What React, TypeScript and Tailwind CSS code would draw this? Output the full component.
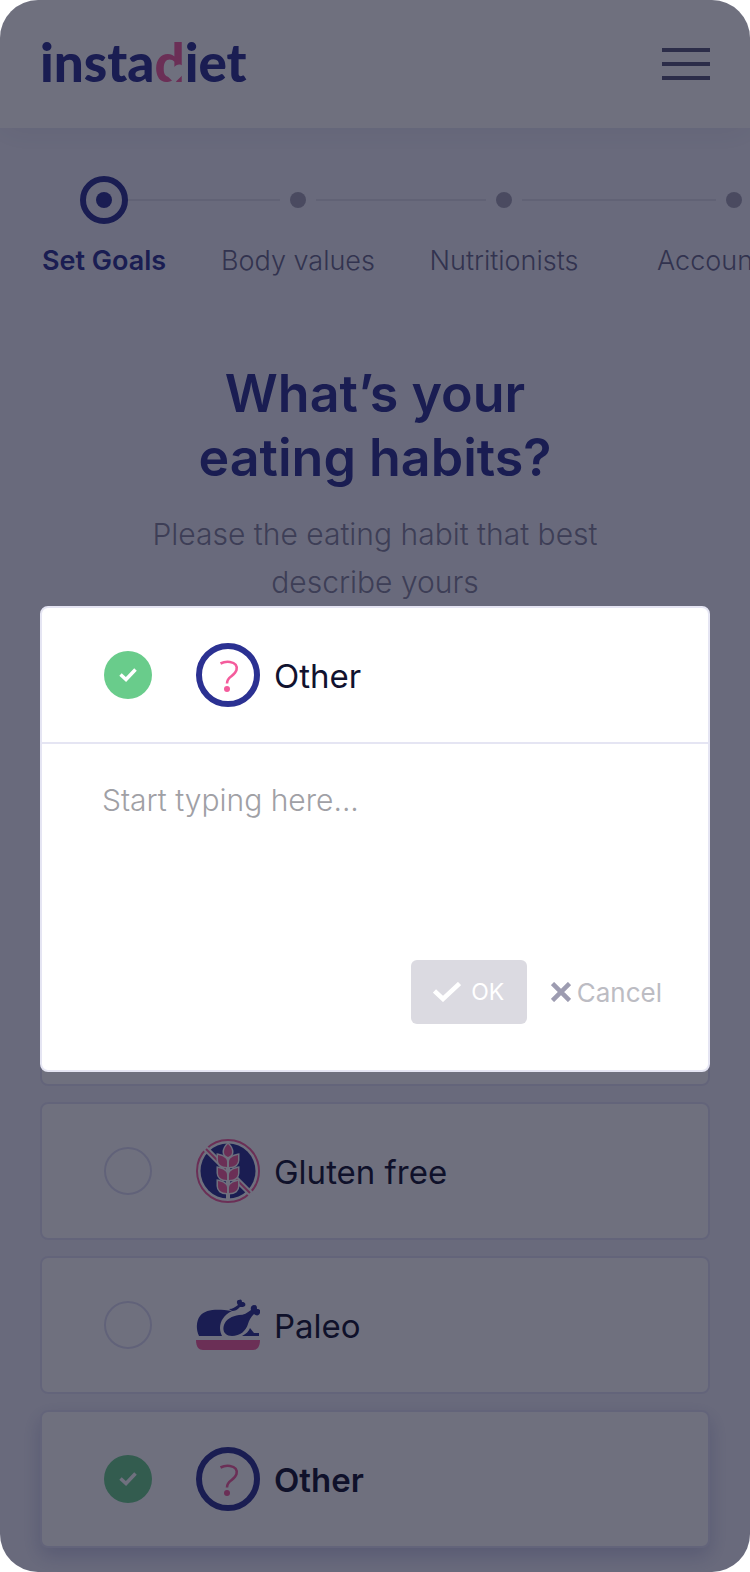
import type { ReactNode } from "react";

function Logo() {
  return (
    <a
      href="#home"
      aria-label="instadiet"
      className="flex items-baseline pb-1 font-[Lato,sans-serif] text-[53px] leading-[64px] font-black text-[#2b3192]"
    >
      <span>insta</span>
      <span className="relative text-[#f45c9c]">
        d
        <svg
          viewBox="0 0 24 20"
          className="absolute right-0 bottom-[11px] h-5 w-[22px]"
          fill="#fff"
          preserveAspectRatio="none"
          aria-hidden="true"
        >
          <path d="M12.500 20 3 11.500C-1 6 3 0 8 .5c2 .2 3.500 1.500 4.500 3.500 1-1.500 3-2.500 5-2.500 5.500 0 8 5 4.500 10z" />
        </svg>
      </span>
      <span>iet</span>
    </a>
  );
}

function MenuIcon() {
  return (
    <svg viewBox="0 0 48 32" className="h-8 w-12" fill="#59587a" aria-hidden="true">
      <rect width="48" height="4" />
      <rect y="14" width="48" height="4" />
      <rect y="28" width="48" height="4" />
    </svg>
  );
}

function OtherIcon() {
  return (
    <svg viewBox="0 0 64 64" className="size-16" fill="none" aria-hidden="true">
      <circle cx="32" cy="32" r="29" stroke="#2b3192" strokeWidth="6" />
      <path
        d="M24.500 20.500c3-1.500 6-2 9.500-1.500 5.500.8 7.500 4 6.500 8-.8 3-3 4.500-5.500 6.500-3 2.200-4 3.500-4 7"
        stroke="#f45c9c"
        strokeWidth="2.600"
      />
      <circle cx="31" cy="46" r="3" fill="#f45c9c" />
    </svg>
  );
}

function GlutenIcon() {
  const grains = (
    <>
      <path d="M32 5c3 3 4 5 4 8 0 2-1 4-4 5-3-1-4-3-4-5 0-3 1-5 4-8z" />
      <path d="M22 16c5 1 9 3 9 7v5c-6 0-9-3-9-7z" />
      <path d="M42 16c-5 1-9 3-9 7v5c6 0 9-3 9-7z" />
      <path d="M22 29c5 1 9 3 9 7v5c-6 0-9-3-9-7z" />
      <path d="M42 29c-5 1-9 3-9 7v5c6 0 9-3 9-7z" />
      <path d="M22 42c5 1 9 3 9 7v5c-6 0-9-3-9-7z" />
      <path d="M42 42c-5 1-9 3-9 7v5c6 0 9-3 9-7z" />
    </>
  );
  return (
    <svg viewBox="0 0 64 64" className="size-16" aria-hidden="true">
      <circle cx="32" cy="32" r="31" fill="#fff" stroke="#f45c9c" strokeWidth="2" />
      <circle cx="32" cy="32" r="27.500" fill="#2b3192" />
      <path d="M9 9 55 55" stroke="#fff" strokeWidth="6" />
      <path d="M10 10 54 54" stroke="#f45c9c" strokeWidth="2" />
      <path d="M32 5v56" stroke="#fff" strokeWidth="4" />
      <g fill="#fff" stroke="#fff" strokeWidth="3">
        {grains}
      </g>
      <g fill="#f45c9c">{grains}</g>
    </svg>
  );
}

function PaleoIcon() {
  return (
    <svg viewBox="0 0 64 64" className="size-16" fill="#2b3192" aria-hidden="true">
      <path d="M3 43C0 37 0 28 4 23c6-7 17-7 32-5-8 4-12 10-12 17 0 3 1 6 2 8z" />
      <path d="M33 16c4 0 6-2 9-4-2-3-1-5 1-5 1-1 3-1 3 2 3 0 4 2 3 4-1 1-3 1-5 1-3 3-5 4-8 4z" />
      <path d="M36 43c-7 0-10-5-8-11 2-6 8-9 15-10 5 0 8-2 12-5-1-3 1-5 3-5 3 0 3 2 3 4 3 0 4 2 3 4-1 3-4 3-6 1-3 3-5 6-6 10-2 7-8 12-16 12z" />
      <path d="M46 43c4-2 7-5 8-8l4 5h5v3z" />
      <path d="M0 47h64c0 7-3 10-7 10H7c-4 0-7-3-7-10z" fill="#f45c9c" />
    </svg>
  );
}

type RoundCheckProps = { id: string; checked?: boolean };

function RoundCheck({ id, checked = false }: RoundCheckProps) {
  return (
    <span className="grid size-12 shrink-0">
      <input
        id={id}
        type="checkbox"
        defaultChecked={checked}
        className="peer col-start-1 row-start-1 size-12 appearance-none rounded-full border-2 border-[#dcdcf2] checked:border-0 checked:bg-[#69cc8b]"
      />
      <svg
        viewBox="0 0 48 48"
        className="pointer-events-none col-start-1 row-start-1 hidden size-12 peer-checked:block"
        fill="none"
        stroke="#fff"
        strokeWidth="3.500"
        aria-hidden="true"
      >
        <path d="m16.500 23.500 5.500 5 9.500-10" />
      </svg>
    </span>
  );
}

type OptionProps = { id: string; icon: ReactNode; label: string; selected?: boolean };

function Option({ id, icon, label, selected = false }: OptionProps) {
  return (
    <li
      className={
        selected
          ? "rounded-lg border-2 border-[#e2e2f4] bg-white shadow-[0_8px_20px_rgba(43,49,146,0.22)]"
          : "rounded-lg border-2 border-[#e2e2f4] bg-white"
      }
    >
      <label htmlFor={id} className="flex h-[134px] items-center pl-[62px]">
        <RoundCheck id={id} checked={selected} />
        <span className="ml-11">{icon}</span>
        <span className={selected ? "ml-3.5 pt-1 text-[33px] font-semibold" : "ml-3.5 pt-1 text-[33px]"}>{label}</span>
      </label>
    </li>
  );
}

function Steps() {
  return (
    <ol className="flex pt-12 pl-[7px] text-[27px] leading-9 font-light text-[#68688a]">
      <li className="w-[194px] shrink-0 text-center font-semibold text-[#2b3192]" aria-current="step">
        <div className="flex h-12 items-center">
          <span className="flex-1" />
          <span className="grid size-12 place-items-center rounded-full border-6 border-[#2b3192]">
            <span className="size-4 rounded-full bg-[#2b3192]" />
          </span>
          <span className="h-0.5 flex-1 bg-[#dcdbe8]" />
        </div>
        <p className="mt-[19px]">Set Goals</p>
      </li>
      <li className="w-[194px] shrink-0 text-center">
        <div className="flex h-12 items-center gap-2.5">
          <span className="h-0.5 flex-1 bg-[#dcdbe8]" />
          <span className="size-4 rounded-full bg-[#a2a1b5]" />
          <span className="h-0.5 flex-1 bg-[#dcdbe8]" />
        </div>
        <p className="mt-[19px]">Body values</p>
      </li>
      <li className="w-[218px] shrink-0 text-center">
        <div className="flex h-12 items-center gap-2.5">
          <span className="h-0.5 flex-1 bg-[#dcdbe8]" />
          <span className="size-4 rounded-full bg-[#a2a1b5]" />
          <span className="h-0.5 flex-1 bg-[#dcdbe8]" />
        </div>
        <p className="mt-[19px]">Nutritionists</p>
      </li>
      <li className="w-[242px] shrink-0">
        <div className="flex h-12 items-center gap-2.5">
          <span className="h-0.5 flex-1 bg-[#dcdbe8]" />
          <span className="size-4 rounded-full bg-[#a2a1b5]" />
          <span className="flex-1" />
        </div>
        <p className="mt-[19px] pl-11">Account</p>
      </li>
    </ol>
  );
}

function OtherDialog() {
  return (
    <div className="absolute inset-0 bg-[#0f1128]/60 px-10 pt-[606px]">
      <div role="dialog" aria-label="Other" className="rounded-lg border-2 border-[#e5e5f3] bg-white">
        <label htmlFor="other-dialog" className="flex h-[136px] items-center border-b-2 border-[#e5e5f3] pl-[62px]">
          <RoundCheck id="other-dialog" checked />
          <span className="ml-11">
            <OtherIcon />
          </span>
          <span className="ml-3.5 pt-1 text-[33px]">Other</span>
        </label>
        <textarea
          aria-label="Your eating habit"
          placeholder="Start typing here..."
          className="block h-[216px] w-full resize-none px-[60px] pt-8 text-[30px] leading-12 font-light outline-none placeholder:text-[#a0a0a5]"
        />
        <div className="flex items-center justify-end gap-6 pr-[46px] pb-[46px]">
          <button
            type="button"
            className="flex h-16 w-[116px] items-center justify-center gap-2.5 rounded-md bg-[#dbdae1] text-[23px] text-white"
          >
            <svg viewBox="0 0 28 20" className="h-5 w-7" fill="none" stroke="#fff" strokeWidth="4.500" aria-hidden="true">
              <path d="m1.500 9 8.500 8L26.500 1.500" />
            </svg>
            OK
          </button>
          <button type="button" className="flex items-center gap-1.5 text-[26px] text-[#bcbcc3]">
            <svg viewBox="0 0 20 20" className="size-5" stroke="#9d9cb1" strokeWidth="4.500" aria-hidden="true">
              <path d="m1.500 1.500 17 17M18.500 1.500l-17 17" />
            </svg>
            Cancel
          </button>
        </div>
      </div>
    </div>
  );
}

export default function App() {
  return (
    <div className="relative overflow-hidden rounded-[38px] bg-[#f1f1fa] pb-6 font-[Inter,sans-serif] text-[#11122f]">
      <header className="flex h-32 items-center justify-between bg-white px-10 shadow-[0_4px_32px_rgba(43,49,146,0.08)]">
        <Logo />
        <button type="button" aria-label="Menu">
          <MenuIcon />
        </button>
      </header>
      <Steps />
      <main className="px-10">
        <h1 className="pt-[83px] text-center text-[52px] leading-16 font-semibold text-[#2b3192]">
          What’s your
          <br />
          eating habits?
        </h1>
        <p className="pt-5 text-center text-[30px] leading-12 font-light text-[#83829c]">
          Please the eating habit that best
          <br />
          describe yours
        </p>
        <ul className="flex flex-col gap-4 pt-[34px]">
          <li className="h-[138px] rounded-lg border-2 border-[#e2e2f4] bg-white" aria-hidden="true" />
          <li className="h-[138px] rounded-lg border-2 border-[#e2e2f4] bg-white" aria-hidden="true" />
          <li className="h-[138px] rounded-lg border-2 border-[#e2e2f4] bg-white" aria-hidden="true" />
          <Option id="gluten-free" icon={<GlutenIcon />} label="Gluten free" />
          <Option id="paleo" icon={<PaleoIcon />} label="Paleo" />
          <Option id="other" icon={<OtherIcon />} label="Other" selected />
        </ul>
      </main>
      <OtherDialog />
    </div>
  );
}
